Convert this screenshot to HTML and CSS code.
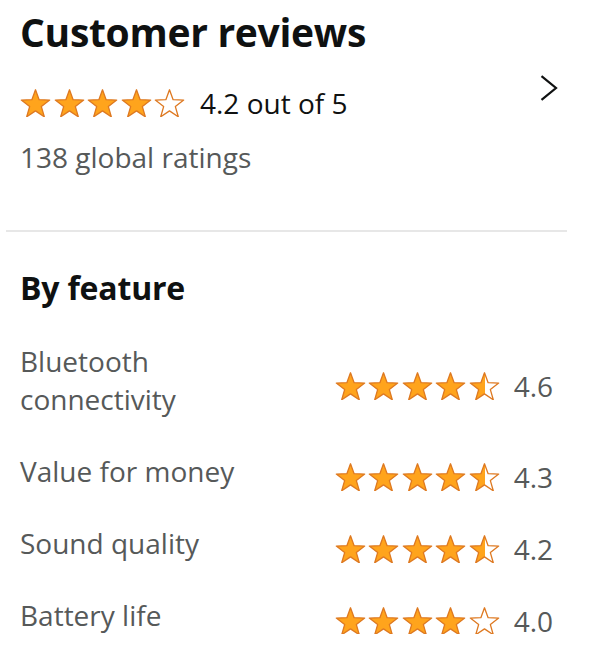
FILE: index.html
```html
<!DOCTYPE html>
<html>
<head>
<meta charset="utf-8">
<link rel="stylesheet" href="styles.css">
</head>
<body>
<svg class="defs" width="0" height="0" aria-hidden="true">
  <defs>
    <linearGradient id="half" x1="0" x2="1" y1="0" y2="0">
      <stop offset="0.5" stop-color="#FFA41C"/>
      <stop offset="0.5" stop-color="#FFFFFF"/>
    </linearGradient>
    <path id="star" d="M0 -16L3.88 -5.34L15.22 -4.94L6.28 2.04L9.40 12.94L0 6.6L-9.40 12.94L-6.28 2.04L-15.22 -4.94L-3.88 -5.34Z"/>
  </defs>
</svg>
<main class="card">
  <section class="summary">
    <h1 class="title">Customer reviews</h1>
    <div class="overall">
      <div class="overall-main">
        <span class="stars">
          <svg viewBox="-16.6 -16.8 33.2 30.5"><use href="#star" class="full"/></svg>
          <svg viewBox="-16.6 -16.8 33.2 30.5"><use href="#star" class="full"/></svg>
          <svg viewBox="-16.6 -16.8 33.2 30.5"><use href="#star" class="full"/></svg>
          <svg viewBox="-16.6 -16.8 33.2 30.5"><use href="#star" class="full"/></svg>
          <svg viewBox="-16.6 -16.8 33.2 30.5"><use href="#star" class="empty"/></svg>
        </span>
        <span class="overall-text">4.2 out of 5</span>
      </div>
      <svg class="chevron" viewBox="0 0 18 26"><path d="M1.5 1.2L16 13L1.5 24.8" fill="none" stroke="#0f1111" stroke-width="2.2"/></svg>
    </div>
    <p class="global">138 global ratings</p>
  </section>
  <hr class="divider">
  <section class="features">
    <h2 class="subtitle">By feature</h2>
    <div class="feature">
      <span class="feature-name">Bluetooth<br>connectivity</span>
      <span class="feature-rating">
        <span class="stars">
          <svg viewBox="-16.6 -16.8 33.2 30.5"><use href="#star" class="full"/></svg>
          <svg viewBox="-16.6 -16.8 33.2 30.5"><use href="#star" class="full"/></svg>
          <svg viewBox="-16.6 -16.8 33.2 30.5"><use href="#star" class="full"/></svg>
          <svg viewBox="-16.6 -16.8 33.2 30.5"><use href="#star" class="full"/></svg>
          <svg viewBox="-16.6 -16.8 33.2 30.5"><use href="#star" class="half"/></svg>
        </span>
        <span class="score">4.6</span>
      </span>
    </div>
    <div class="feature">
      <span class="feature-name">Value for money</span>
      <span class="feature-rating">
        <span class="stars">
          <svg viewBox="-16.6 -16.8 33.2 30.5"><use href="#star" class="full"/></svg>
          <svg viewBox="-16.6 -16.8 33.2 30.5"><use href="#star" class="full"/></svg>
          <svg viewBox="-16.6 -16.8 33.2 30.5"><use href="#star" class="full"/></svg>
          <svg viewBox="-16.6 -16.8 33.2 30.5"><use href="#star" class="full"/></svg>
          <svg viewBox="-16.6 -16.8 33.2 30.5"><use href="#star" class="half"/></svg>
        </span>
        <span class="score">4.3</span>
      </span>
    </div>
    <div class="feature">
      <span class="feature-name">Sound quality</span>
      <span class="feature-rating">
        <span class="stars">
          <svg viewBox="-16.6 -16.8 33.2 30.5"><use href="#star" class="full"/></svg>
          <svg viewBox="-16.6 -16.8 33.2 30.5"><use href="#star" class="full"/></svg>
          <svg viewBox="-16.6 -16.8 33.2 30.5"><use href="#star" class="full"/></svg>
          <svg viewBox="-16.6 -16.8 33.2 30.5"><use href="#star" class="full"/></svg>
          <svg viewBox="-16.6 -16.8 33.2 30.5"><use href="#star" class="half"/></svg>
        </span>
        <span class="score">4.2</span>
      </span>
    </div>
    <div class="feature">
      <span class="feature-name">Battery life</span>
      <span class="feature-rating">
        <span class="stars">
          <svg viewBox="-16.6 -16.8 33.2 30.5"><use href="#star" class="full"/></svg>
          <svg viewBox="-16.6 -16.8 33.2 30.5"><use href="#star" class="full"/></svg>
          <svg viewBox="-16.6 -16.8 33.2 30.5"><use href="#star" class="full"/></svg>
          <svg viewBox="-16.6 -16.8 33.2 30.5"><use href="#star" class="full"/></svg>
          <svg viewBox="-16.6 -16.8 33.2 30.5"><use href="#star" class="empty"/></svg>
        </span>
        <span class="score">4.0</span>
      </span>
    </div>
  </section>
</main>
</body>
</html>
```
FILE: styles.css
```css
html, body {
  margin: 0;
  padding: 0;
  background: #ffffff;
}
body {
  font-family: "Open Sans", "Noto Sans", Arial, sans-serif;
  color: #0f1111;
}
.defs {
  position: absolute;
  width: 0;
  height: 0;
  overflow: hidden;
}
.card {
  width: 600px;
}
.summary {
  padding: 0 20px;
}
.title {
  margin: 0;
  padding-top: 7px;
  font-size: 39px;
  font-weight: 700;
  line-height: 50px;
  letter-spacing: -0.3px;
}
.overall {
  display: flex;
  align-items: flex-start;
  justify-content: space-between;
  margin-top: 29px;
}
.overall-main {
  display: flex;
  align-items: center;
  gap: 15px;
}
.chevron {
  width: 18px;
  height: 26px;
  margin-top: -11px;
  margin-right: 22px;
}
.overall-text {
  font-size: 28px;
  line-height: 34px;
}
.global {
  margin: 20px 0 0;
  font-size: 28px;
  line-height: 34px;
  color: #565959;
}
.divider {
  margin: 56px 33px 0 6px;
  border: 0;
  height: 2px;
  background: #e7e7e7;
}
.features {
  padding: 0 20px;
}
.subtitle {
  margin: 36px 0 0;
  font-size: 32px;
  font-weight: 700;
  line-height: 40px;
  letter-spacing: -0.2px;
}
.stars {
  display: flex;
  gap: 2.5px;
}
.stars svg {
  display: block;
  width: 31px;
  height: 28.5px;
}
.stars use {
  stroke: #DE7921;
  stroke-width: 1.4;
  stroke-linejoin: round;
}
.stars .full {
  fill: #FFA41C;
}
.stars .empty {
  fill: #ffffff;
}
.stars .half {
  fill: url(#half);
}
.feature {
  display: flex;
  align-items: center;
  justify-content: space-between;
  margin-top: 34px;
  padding-right: 27px;
}
.feature-name {
  font-size: 28px;
  line-height: 38px;
  color: #565959;
}
.feature-rating {
  display: flex;
  align-items: center;
  gap: 14px;
  margin: 6px 0 -6px;
}
.score {
  font-size: 28px;
  line-height: 34px;
  color: #565959;
}
```
